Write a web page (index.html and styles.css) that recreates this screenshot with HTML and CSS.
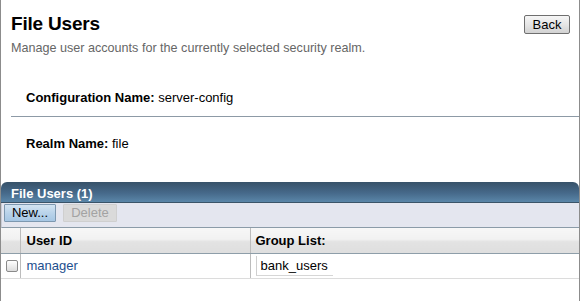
FILE: index.html
```html
<!DOCTYPE html>
<html lang="en">
<head>
    <meta charset="UTF-8">
    <title>File Users</title>
    <link rel="stylesheet" href="styles.css">
</head>
<body>
    <div class="page">
        <div class="page-head">
            <div class="title-row">
                <h1>File Users</h1>
                <button class="btn">Back</button>
            </div>
            <p class="help">Manage user accounts for the currently selected security realm.</p>
        </div>

        <div class="prop-row first">
            <span class="prop-label">Configuration Name:</span>
            <span class="prop-value">server-config</span>
        </div>
        <hr class="sep">
        <div class="prop-row second">
            <span class="prop-label">Realm Name:</span>
            <span class="prop-value">file</span>
        </div>

        <div class="table-box">
            <div class="table-title">File Users (1)</div>
            <div class="table-toolbar">
                <button class="tbtn primary">New...</button>
                <button class="tbtn" disabled>Delete</button>
            </div>
            <table class="grid">
                <thead>
                    <tr>
                        <th class="col-select"></th>
                        <th class="col-id">User ID</th>
                        <th class="col-groups">Group List:</th>
                    </tr>
                </thead>
                <tbody>
                    <tr>
                        <td class="col-select"><span class="check"></span></td>
                        <td class="col-id"><a href="#" class="link">manager</a></td>
                        <td class="col-groups"><span class="field">bank_users</span></td>
                    </tr>
                </tbody>
            </table>
        </div>
    </div>
</body>
</html>
```

FILE: styles.css
```css
html, body {
    margin: 0;
    padding: 0;
    background: #fff;
}

body {
    font-family: "Liberation Sans", Arial, Helvetica, sans-serif;
    font-size: 13px;
    color: #000;
}

.page {
    box-sizing: border-box;
    width: 580px;
    height: 301px;
    border-left: 1px solid #8c8c8c;
    border-right: 1px solid #8c8c8c;
}

.page-head {
    padding: 13px 9px 0 10px;
}

.title-row {
    display: flex;
    justify-content: space-between;
    align-items: flex-start;
}

h1 {
    margin: 0;
    font-size: 19px;
    line-height: 22px;
    font-weight: 700;
    letter-spacing: -0.2px;
}

.btn {
    margin-top: 2px;
    height: 19px;
    width: 46px;
    padding: 0;
    border: 1px solid #6f6f6f;
    border-radius: 2px;
    background: linear-gradient(#f6f6f6 0%, #e6e6e6 50%, #d2d2d2 100%);
    font-family: inherit;
    font-size: 13px;
    line-height: 17px;
    color: #000;
}

.help {
    margin: 6px 0 0;
    font-size: 12.6px;
    line-height: 15px;
    color: #666;
}

.prop-row {
    padding-left: 25px;
    line-height: 15px;
}

.prop-row.first {
    margin-top: 34px;
}

.prop-row.second {
    margin-top: 19px;
}

.prop-label {
    font-weight: 700;
}

.sep {
    margin: 11px 0 0 10px;
    border: 0;
    height: 1px;
    background: #8d9aa6;
}

.table-box {
    margin-top: 31px;
}

.table-title {
    padding: 4px 10px 0;
    line-height: 16px;
    font-weight: 700;
    color: #fff;
    border-radius: 6px 6px 0 0;
    border-bottom: 1px solid #3a5468;
    background: linear-gradient(#375269 0%, #46698a 55%, #5a86a8 100%);
}

.table-toolbar {
    display: flex;
    gap: 7px;
    height: 25px;
    padding: 1px 0 0 2px;
    box-sizing: border-box;
    background: #e4e6ef;
    border-bottom: 1px solid #8b9ba8;
    border-left: 1px solid #c9ccd6;
}

.tbtn {
    height: 18px;
    padding: 0;
    font-family: inherit;
    font-size: 13px;
    line-height: 16px;
    border-radius: 1px;
}

.tbtn.primary {
    width: 52px;
    color: #000;
    border: 1px solid #7d98b0;
    background: linear-gradient(#d3e4f2 0%, #b9d3ea 50%, #a6c7e4 100%);
}

.tbtn:disabled {
    width: 54px;
    color: #a3a3a3;
    border: 1px solid #cfcfcf;
    background: #dadada;
}

.grid {
    width: 100%;
    border-collapse: collapse;
    table-layout: fixed;
}

.grid th,
.grid td {
    box-sizing: border-box;
    padding: 0 0 0 5px;
}

.grid th {
    height: 25px;
    text-align: left;
    font-weight: 700;
    background: linear-gradient(#f7f7f7 0%, #f1f1f1 45%, #e3e3e3 55%, #dedede 100%);
    border-bottom: 1px solid #8e9ea9;
}

.grid td {
    height: 25px;
    border-bottom: 1px solid #dcdcdc;
}

.grid .col-select {
    width: 19px;
}

.grid .col-id {
    width: 230px;
    padding-left: 6px;
    border-left: 1px solid #bcbcbc;
}

.grid .col-groups {
    border-left: 1px solid #bcbcbc;
}

.check {
    display: block;
    width: 10px;
    height: 10px;
    border: 1px solid #8a8a8a;
    border-radius: 2px;
    background: linear-gradient(#ffffff, #dcdcdc);
}

.link {
    color: #1d4f8e;
    text-decoration: none;
}

.field {
    display: block;
    width: 72px;
    height: 19px;
    margin-top: 1px;
    padding-left: 4px;
    line-height: 19px;
    border-left: 1px solid #cfcfcf;
    border-bottom: 1px solid #d6d6d6;
}
```
